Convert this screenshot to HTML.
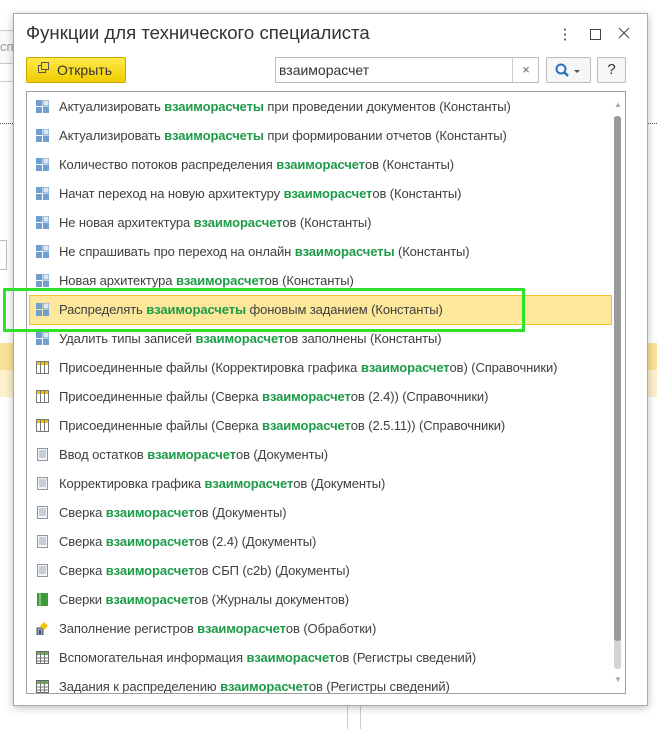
<!DOCTYPE html>
<html><head><meta charset="utf-8"><style>
body{margin:0;width:657px;height:729px;background:#fff;position:relative;overflow:hidden;font-family:"Liberation Sans",Arial,sans-serif;}
.abs{position:absolute}
.dlg{left:13px;top:13px;width:633px;height:691px;border:1px solid #a8a8a8;background:#fff;box-shadow:0 2px 8px rgba(0,0,0,.25)}
.title{left:26px;top:22px;font-size:18.6px;color:#333}
.list{left:26px;top:91px;width:598px;height:601px;border:1px solid #a0a0a0;background:#fff;overflow:hidden}
.row{position:absolute;left:0;height:29px;line-height:29px;font-size:13px;letter-spacing:-0.1px;color:#404040;white-space:nowrap}
.row b{color:#1d9b48;font-weight:bold}
.ic{position:absolute;left:9px;top:8px;width:13px;height:13px}
.row span{position:absolute;left:32px}
</style></head><body>
<div class="abs" style="left:0;top:30px;width:13px;height:32px;border:1px solid #ccc;border-left:0;background:#fafafa;font-size:13px;color:#999;line-height:32px;overflow:hidden">спо</div>
<div class="abs" style="left:0;top:81px;width:13px;height:1px;background:#ccc"></div>
<div class="abs" style="left:0;top:123px;width:13px;border-top:1px dotted #555"></div>
<div class="abs" style="left:646px;top:123px;width:11px;border-top:1px dotted #555"></div>
<div class="abs" style="left:0;top:240px;width:6px;height:28px;border:1px solid #bbb;border-left:0"></div>
<div class="abs" style="left:0;top:343px;width:13px;height:27px;background:#fbe29a"></div>
<div class="abs" style="left:0;top:370px;width:13px;height:27px;background:#fdf0cc"></div>
<div class="abs" style="left:647px;top:343px;width:10px;height:27px;background:#fbe29a"></div>
<div class="abs" style="left:647px;top:370px;width:10px;height:27px;background:#fdf0cc"></div>
<div class="abs" style="left:347px;top:705px;width:12px;height:24px;border-left:1px solid #ccc;border-right:1px solid #ccc"></div>
<div class="abs dlg"></div>
<div class="abs title">Функции для технического специалиста</div>
<div class="abs" style="left:564px;top:27px;width:2px;height:14px;background:radial-gradient(circle,#666 40%,transparent 45%) 0 0/2px 5px"></div>
<div class="abs" style="left:590px;top:29px;width:9px;height:9px;border:1.5px solid #444"></div>
<svg class="abs" style="left:618px;top:27px" width="12" height="12"><path d="M1 1l10 10M11 1L1 11" stroke="#555" stroke-width="1.2"/></svg>
<div class="abs" style="left:26px;top:57px;width:98px;height:24px;border:1px solid #c9a800;border-radius:2px;background:linear-gradient(#ffe84a,#f0cd00);font-size:14px;color:#333;line-height:24px"><span style="position:absolute;left:11px;top:7px;width:6px;height:6px;border:1px solid #555"></span><span style="position:absolute;left:14px;top:4px;width:6px;height:6px;border:1px solid #555;background:#fbe02a"></span><span style="position:absolute;left:30px">Открыть</span></div>
<div class="abs" style="left:275px;top:57px;width:262px;height:24px;border:1px solid #bbb;font-size:14px;line-height:24px;color:#333"><span style="position:absolute;left:3px">взаиморасчет</span><span style="position:absolute;left:236px;top:0;height:24px;border-left:1px solid #ccc;width:26px;text-align:center;color:#666;font-size:13px">×</span></div>
<div class="abs" style="left:546px;top:57px;width:43px;height:24px;border:1px solid #bbb;border-radius:2px;background:#f6f6f6"><svg width="43" height="24"><circle cx="14" cy="11" r="4.5" fill="none" stroke="#2a6fc0" stroke-width="2"/><path d="M17 14l4 4" stroke="#2a6fc0" stroke-width="2.5"/><path d="M27 12h6l-3 3z" fill="#555"/></svg></div>
<div class="abs" style="left:597px;top:57px;width:27px;height:24px;border:1px solid #bbb;border-radius:2px;background:#f6f6f6;text-align:center;line-height:24px;font-size:15px;color:#333">?</div>
<div class="abs list">
<svg width="0" height="0" style="position:absolute"><defs>
<g id="k"><rect x="0" y="0" width="6" height="6" fill="#6f9fd0"/><rect x="7" y="0" width="6" height="6" fill="#dce8f4" stroke="#6f9fd0"/><rect x="0" y="7" width="6" height="6" fill="#6f9fd0"/><rect x="7" y="7" width="6" height="6" fill="#6f9fd0"/></g>
<g id="c"><rect x="0.5" y="0.5" width="12" height="12" fill="#fff" stroke="#777"/><rect x="1" y="1" width="11" height="3" fill="#f2c300"/><path d="M4.5 1v12M8.5 1v12" stroke="#777"/></g>
<g id="d"><rect x="1.5" y="0.5" width="10" height="12" fill="#f4f6f8" stroke="#8a96a3"/><path d="M3 3h7M3 5h7M3 7h7M3 9h7" stroke="#9aa6b3"/></g>
<g id="j"><rect x="1" y="0" width="11" height="13" fill="#3e9a3a"/><rect x="3" y="0" width="2" height="13" fill="#7cc36f"/></g>
<g id="p"><rect x="1" y="6" width="6" height="7" fill="#8aa6c8" stroke="#555"/><path d="M8 0l4 4-4 4-4-4z" fill="#f6c000"/><path d="M4 8v4" stroke="#000"/></g>
<g id="r"><rect x="0.5" y="0.5" width="12" height="12" fill="#fff" stroke="#666"/><rect x="1" y="1" width="11" height="3" fill="#6bae5a"/><path d="M4.5 1v12M8.5 1v12M1 7h11M1 10h11" stroke="#777"/></g>
</defs></svg>
<div class="abs" style="left:2px;top:203px;width:581px;height:28px;background:#fde79b;border:1px solid #f2c12e"></div>
<div class="row" style="top:0"><svg class="ic"><use href="#k"/></svg><span>Актуализировать <b>взаиморасчеты</b> при проведении документов (Константы)</span></div>
<div class="row" style="top:29px"><svg class="ic"><use href="#k"/></svg><span>Актуализировать <b>взаиморасчеты</b> при формировании отчетов (Константы)</span></div>
<div class="row" style="top:58px"><svg class="ic"><use href="#k"/></svg><span>Количество потоков распределения <b>взаиморасчет</b>ов (Константы)</span></div>
<div class="row" style="top:87px"><svg class="ic"><use href="#k"/></svg><span>Начат переход на новую архитектуру <b>взаиморасчет</b>ов (Константы)</span></div>
<div class="row" style="top:116px"><svg class="ic"><use href="#k"/></svg><span>Не новая архитектура <b>взаиморасчет</b>ов (Константы)</span></div>
<div class="row" style="top:145px"><svg class="ic"><use href="#k"/></svg><span>Не спрашивать про переход на онлайн <b>взаиморасчеты</b> (Константы)</span></div>
<div class="row" style="top:174px"><svg class="ic"><use href="#k"/></svg><span>Новая архитектура <b>взаиморасчет</b>ов (Константы)</span></div>
<div class="row" style="top:203px"><svg class="ic"><use href="#k"/></svg><span>Распределять <b>взаиморасчеты</b> фоновым заданием (Константы)</span></div>
<div class="row" style="top:232px"><svg class="ic"><use href="#k"/></svg><span>Удалить типы записей <b>взаиморасчет</b>ов заполнены (Константы)</span></div>
<div class="row" style="top:261px"><svg class="ic"><use href="#c"/></svg><span>Присоединенные файлы (Корректировка графика <b>взаиморасчет</b>ов) (Справочники)</span></div>
<div class="row" style="top:290px"><svg class="ic"><use href="#c"/></svg><span>Присоединенные файлы (Сверка <b>взаиморасчет</b>ов (2.4)) (Справочники)</span></div>
<div class="row" style="top:319px"><svg class="ic"><use href="#c"/></svg><span>Присоединенные файлы (Сверка <b>взаиморасчет</b>ов (2.5.11)) (Справочники)</span></div>
<div class="row" style="top:348px"><svg class="ic"><use href="#d"/></svg><span>Ввод остатков <b>взаиморасчет</b>ов (Документы)</span></div>
<div class="row" style="top:377px"><svg class="ic"><use href="#d"/></svg><span>Корректировка графика <b>взаиморасчет</b>ов (Документы)</span></div>
<div class="row" style="top:406px"><svg class="ic"><use href="#d"/></svg><span>Сверка <b>взаиморасчет</b>ов (Документы)</span></div>
<div class="row" style="top:435px"><svg class="ic"><use href="#d"/></svg><span>Сверка <b>взаиморасчет</b>ов (2.4) (Документы)</span></div>
<div class="row" style="top:464px"><svg class="ic"><use href="#d"/></svg><span>Сверка <b>взаиморасчет</b>ов СБП (c2b) (Документы)</span></div>
<div class="row" style="top:493px"><svg class="ic"><use href="#j"/></svg><span>Сверки <b>взаиморасчет</b>ов (Журналы документов)</span></div>
<div class="row" style="top:522px"><svg class="ic"><use href="#p"/></svg><span>Заполнение регистров <b>взаиморасчет</b>ов (Обработки)</span></div>
<div class="row" style="top:551px"><svg class="ic"><use href="#r"/></svg><span>Вспомогательная информация <b>взаиморасчет</b>ов (Регистры сведений)</span></div>
<div class="row" style="top:580px"><svg class="ic"><use href="#r"/></svg><span>Задания к распределению <b>взаиморасчет</b>ов (Регистры сведений)</span></div>
<div class="abs" style="left:587px;top:8px;font-size:8px;color:#aaa">▲</div>
<div class="abs" style="left:587px;top:24px;width:7px;height:553px;background:#d4d4d4;border-radius:3px"></div>
<div class="abs" style="left:587px;top:24px;width:7px;height:525px;background:#9a9a9a;border-radius:3px"></div>
<div class="abs" style="left:587px;top:583px;font-size:8px;color:#aaa">▼</div>
</div>
<div class="abs" style="left:3px;top:288px;width:516px;height:38px;border:3px solid #2fe12a;border-radius:1px"></div>
</body></html>
